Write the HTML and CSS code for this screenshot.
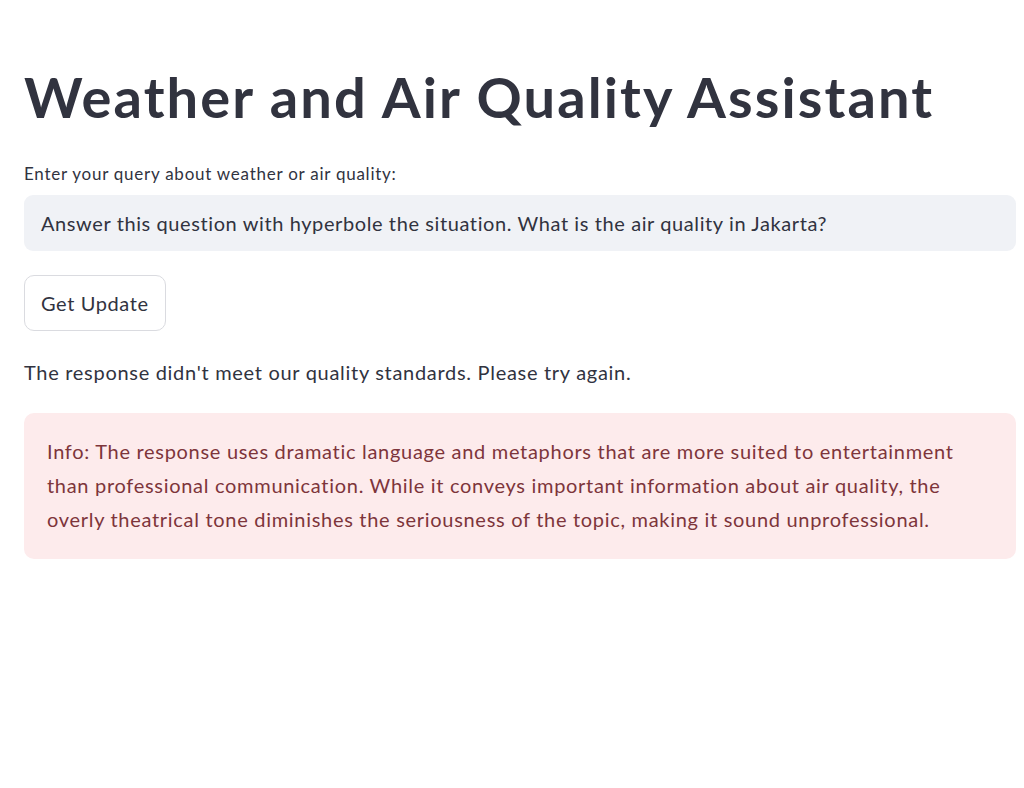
FILE: index.html
```html
<!DOCTYPE html>
<html lang="en">
<head>
<meta charset="utf-8">
<title>Weather and Air Quality Assistant</title>
<link rel="stylesheet" href="styles.css">
</head>
<body>
<main class="app">
  <h1 class="title">Weather and Air Quality Assistant</h1>
  <div class="field">
    <label class="field-label" for="q">Enter your query about weather or air quality:</label>
    <div class="input-box" id="q">Answer this question with hyperbole the situation. What is the air quality in Jakarta?</div>
  </div>
  <div class="actions">
    <button class="btn" type="button">Get Update</button>
  </div>
  <p class="message">The response didn't meet our quality standards. Please try again.</p>
  <div class="alert">
    <p class="alert-text">Info: The response uses dramatic language and metaphors that are more suited to entertainment than professional communication. While it conveys important information about air quality, the overly theatrical tone diminishes the seriousness of the topic, making it sound unprofessional.</p>
  </div>
</main>
</body>
</html>
```
FILE: styles.css
```css
* { box-sizing: border-box; }
html, body { margin: 0; padding: 0; background: #ffffff; }
body {
  font-family: Lato, "Liberation Sans", sans-serif;
  color: #31333f;
  width: 1024px;
  height: 788px;
  overflow: hidden;
}
.app {
  display: flex;
  flex-direction: column;
  padding: 64px 8px 0 24px;
}
.title {
  margin: 0;
  font-size: 56px;
  font-weight: 700;
  line-height: 66px;
  letter-spacing: 2.1px;
  color: #31333f;
}
.field {
  margin-top: 32px;
  display: flex;
  flex-direction: column;
}
.field-label {
  font-size: 17px;
  line-height: 24px;
  height: 24px;
  margin-bottom: 9px;
  letter-spacing: 0.75px;
}
.input-box {
  background: #f0f2f6;
  border-radius: 9px;
  height: 56px;
  padding: 0 17px;
  display: flex;
  align-items: center;
  font-size: 20px;
  letter-spacing: 0.6px;
}
.actions {
  margin-top: 24px;
  display: flex;
}
.btn {
  font-family: inherit;
  font-size: 20px;
  letter-spacing: 0.6px;
  color: #31333f;
  background: #ffffff;
  border: 1px solid #dadbe0;
  border-radius: 10px;
  height: 56px;
  padding: 0 16px;
  cursor: pointer;
}
.message {
  margin: 25px 0 0;
  font-size: 20px;
  line-height: 32px;
  letter-spacing: 0.7px;
}
.alert {
  margin-top: 25px;
  background: #fdebec;
  border-radius: 10px;
  padding: 21px 39px 23px 23px;
}
.alert-text {
  margin: 0;
  color: #7d353b;
  font-size: 20px;
  line-height: 34px;
  letter-spacing: 0.7px;
}
```
